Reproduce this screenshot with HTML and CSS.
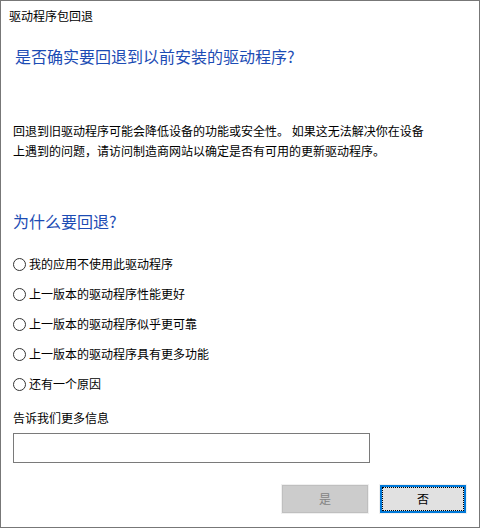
FILE: index.html
```html
<!DOCTYPE html>
<html lang="zh-CN">
<head>
<meta charset="utf-8">
<link rel="stylesheet" href="styles.css">
</head>
<body>
<div class="window">
  <div class="title">驱动程序包回退</div>
  <div class="content">
    <h1 class="main">是否确实要回退到以前安装的驱动程序?</h1>
    <p class="desc">回退到旧驱动程序可能会降低设备的功能或安全性。 如果这无法解决你在设备上遇到的问题，请访问制造商网站以确定是否有可用的更新驱动程序。</p>
    <h2 class="sub">为什么要回退?</h2>
    <div class="radios">
      <div class="radio"><span class="circle"></span><span>我的应用不使用此驱动程序</span></div>
      <div class="radio"><span class="circle"></span><span>上一版本的驱动程序性能更好</span></div>
      <div class="radio"><span class="circle"></span><span>上一版本的驱动程序似乎更可靠</span></div>
      <div class="radio"><span class="circle"></span><span>上一版本的驱动程序具有更多功能</span></div>
      <div class="radio"><span class="circle"></span><span>还有一个原因</span></div>
    </div>
    <div class="label">告诉我们更多信息</div>
    <div class="textbox"></div>
  </div>
  <div class="buttons">
    <div class="btn disabled">是</div>
    <div class="btn focused">否</div>
  </div>
</div>
</body>
</html>
```
FILE: styles.css
```css
html, body {
  margin: 0;
  padding: 0;
  background: #ffffff;
}
body {
  font-family: "Noto Sans CJK SC", "Noto Sans", sans-serif;
  font-size: 12px;
  color: #000000;
}
.window {
  width: 480px;
  height: 528px;
  box-sizing: border-box;
  border: 1px solid #777777;
  background: #ffffff;
  display: flex;
  flex-direction: column;
}
.title {
  margin-top: 7px;
  padding-left: 8px;
  font-size: 12px;
  line-height: 16px;
  color: #000000;
}
.content {
  padding-left: 12px;
  display: flex;
  flex-direction: column;
}
.main {
  margin: 21px 0 0 2px;
  font-size: 16px;
  font-weight: normal;
  line-height: 22px;
  color: #1c4cb4;
}
.desc {
  margin: 54px 0 0 0;
  width: 418px;
  font-size: 12px;
  line-height: 20px;
}
.sub {
  margin: 49px 0 0 0;
  font-size: 16px;
  font-weight: normal;
  line-height: 22px;
  color: #1c4cb4;
}
.radios {
  margin-top: 17px;
  display: flex;
  flex-direction: column;
}
.radio {
  height: 30px;
  display: flex;
  align-items: center;
  gap: 3px;
  line-height: 16px;
}
.circle {
  width: 13px;
  height: 13px;
  box-sizing: border-box;
  border: 1px solid #333333;
  border-radius: 50%;
  background: #ffffff;
  flex: none;
}
.label {
  margin-top: 11px;
  line-height: 16px;
}
.textbox {
  margin-top: 7px;
  width: 357px;
  height: 30px;
  box-sizing: border-box;
  border: 1px solid #7a7a7a;
  background: #ffffff;
}
.buttons {
  margin-top: 21px;
  padding-right: 12px;
  display: flex;
  justify-content: flex-end;
  gap: 10px;
}
.btn {
  width: 88px;
  height: 30px;
  box-sizing: border-box;
  display: flex;
  align-items: center;
  justify-content: center;
  font-size: 12px;
  line-height: 16px;
  position: relative;
}
.btn.disabled {
  border: 1px solid #f0f0f0;
  box-shadow: inset 0 0 0 1px #bfbfbf;
  background: #cccccc;
  color: #838383;
}
.btn.focused {
  border: 1px solid #f0f0f0;
  box-shadow: inset 0 0 0 2px #0078d7;
  background: #e1e1e1;
  color: #000000;
}
.btn.focused::after {
  content: "";
  position: absolute;
  inset: 2px;
  border: 1px dotted #000000;
}
```
